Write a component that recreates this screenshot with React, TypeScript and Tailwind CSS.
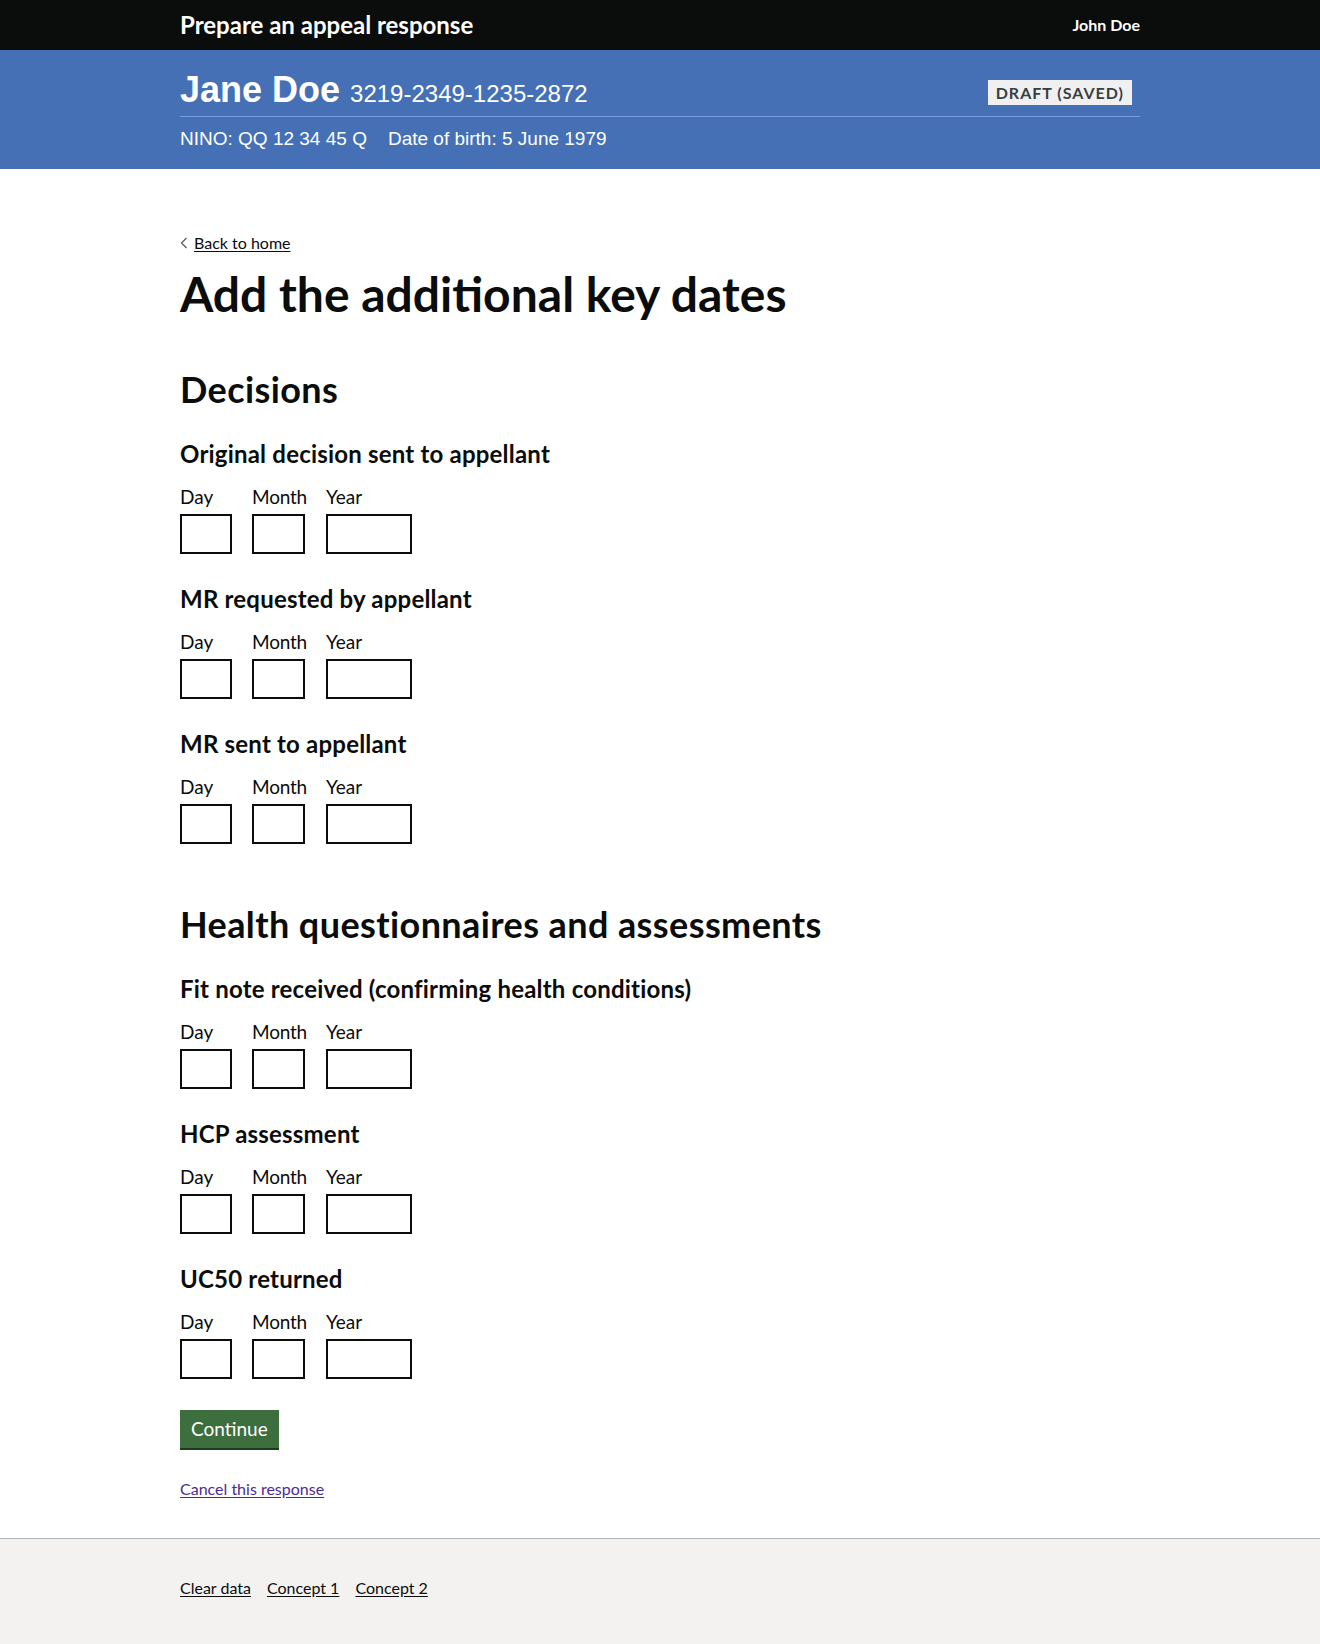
import React from "react";

const font = { fontFamily: "Lato, 'Open Sans', Arial, sans-serif" };
const arial = { fontFamily: "'Liberation Sans', Arial, sans-serif" };

type DateFieldProps = {
  label: string;
};

function DateField({ label }: DateFieldProps) {
  return (
    <div className="mb-[30px]">
      <h3 className="text-[24px] font-bold leading-[30px] tracking-[0.2px] text-[#0b0c0c]">
        {label}
      </h3>
      <div className="mt-[15px] flex">
        <div className="mr-[20px] flex w-[52px] flex-col">
          <span className="whitespace-nowrap text-[19px] leading-[25px]">Day</span>
          <input
            type="text"
            className="mt-[5px] h-[40px] w-[52px] border-2 border-[#0b0c0c] px-[5px] outline-none"
          />
        </div>
        <div className="mr-[21px] flex w-[53px] flex-col">
          <span className="whitespace-nowrap text-[19px] leading-[25px] tracking-[-0.2px]">Month</span>
          <input
            type="text"
            className="mt-[5px] h-[40px] w-[53px] border-2 border-[#0b0c0c] px-[5px] outline-none"
          />
        </div>
        <div className="flex w-[86px] flex-col">
          <span className="whitespace-nowrap text-[19px] leading-[25px]">Year</span>
          <input
            type="text"
            className="mt-[5px] h-[40px] w-[86px] border-2 border-[#0b0c0c] px-[5px] outline-none"
          />
        </div>
      </div>
    </div>
  );
}

export default function App() {
  return (
    <div className="min-h-[1644px] flex flex-col bg-white text-[#0b0c0c]" style={font}>
      {/* top bar */}
      <header className="h-[50px] bg-[#0b0c0c]">
        <div className="mx-auto flex h-full w-[960px] items-center justify-between">
          <span className="text-[24px] font-bold leading-none text-white">
            Prepare an appeal response
          </span>
          <span className="text-[16px] font-bold text-white">John Doe</span>
        </div>
      </header>

      {/* claimant banner */}
      <div className="h-[119px] bg-[#4570b6]">
        <div className="mx-auto w-[960px] pt-[19px]">
          <div
            className="flex items-center justify-between border-b border-[#7d9fdf] pb-[5px]"
            style={arial}
          >
            <div className="flex items-baseline text-white">
              <span className="text-[36px] font-bold leading-[42px]">Jane Doe</span>
              <span className="ml-[10px] text-[24px] leading-[28px]">
                3219-2349-1235-2872
              </span>
            </div>
            <span
              className="mr-[8px] mt-[4px] bg-[#f0f0f0] px-[8px] pb-[2px] pt-[3px] text-[16px] font-bold uppercase leading-[20px] tracking-[1px] text-[#383f43]"
              style={font}
            >
              Draft (saved)
            </span>
          </div>
          <div
            className="mt-[10px] flex gap-[21px] text-[19px] leading-[24px] text-white"
            style={arial}
          >
            <span>NINO: QQ 12 34 45 Q</span>
            <span>Date of birth: 5 June 1979</span>
          </div>
        </div>
      </div>

      {/* main */}
      <main className="mx-auto w-[960px] flex-none pt-[64px]">
        <a href="#" className="flex items-center text-[16px] leading-[20px] text-[#0b0c0c]">
          <svg width="8" height="12" viewBox="0 0 8 12" className="mr-[6px]">
            <path d="M6.5 1 L1.5 6 L6.5 11" fill="none" stroke="#505a5f" strokeWidth="1.2" />
          </svg>
          <span className="underline underline-offset-[2px]">Back to home</span>
        </a>

        <h1 className="mt-[16px] text-[48px] font-bold leading-[50px]">
          Add the additional key dates
        </h1>

        <h2 className="mt-[50px] mb-[30px] text-[36px] font-bold leading-[40px] tracking-[0.4px]">
          Decisions
        </h2>
        <DateField label="Original decision sent to appellant" />
        <DateField label="MR requested by appellant" />
        <DateField label="MR sent to appellant" />

        <h2 className="mt-[60px] mb-[30px] text-[36px] font-bold leading-[40px] tracking-[0.4px]">
          Health questionnaires and assessments
        </h2>
        <DateField label="Fit note received (confirming health conditions)" />
        <DateField label="HCP assessment" />
        <DateField label="UC50 returned" />

        <button
          type="button"
          className="mt-[1px] h-[38px] bg-[#3d6e3e] px-[11px] text-[19px] leading-[38px] text-white shadow-[0_2px_0_#1c3a1e]"
        >
          Continue
        </button>

        <div className="mt-[29px] mb-[37px]">
          <a href="#" className="text-[16px] leading-[20px] text-[#4c2c92] underline underline-offset-[2px]">
            Cancel this response
          </a>
        </div>
      </main>

      {/* footer */}
      <footer className="flex-1 border-t border-[#b1b4b6] bg-[#f3f2f1] pb-[46px] pt-[39px]">
        <div className="mx-auto flex w-[960px] gap-[16px] text-[16px] leading-[20px]">
          <a href="#" className="underline underline-offset-[2px]">Clear data</a>
          <a href="#" className="underline underline-offset-[2px]">Concept 1</a>
          <a href="#" className="underline underline-offset-[2px]">Concept 2</a>
        </div>
      </footer>
    </div>
  );
}
